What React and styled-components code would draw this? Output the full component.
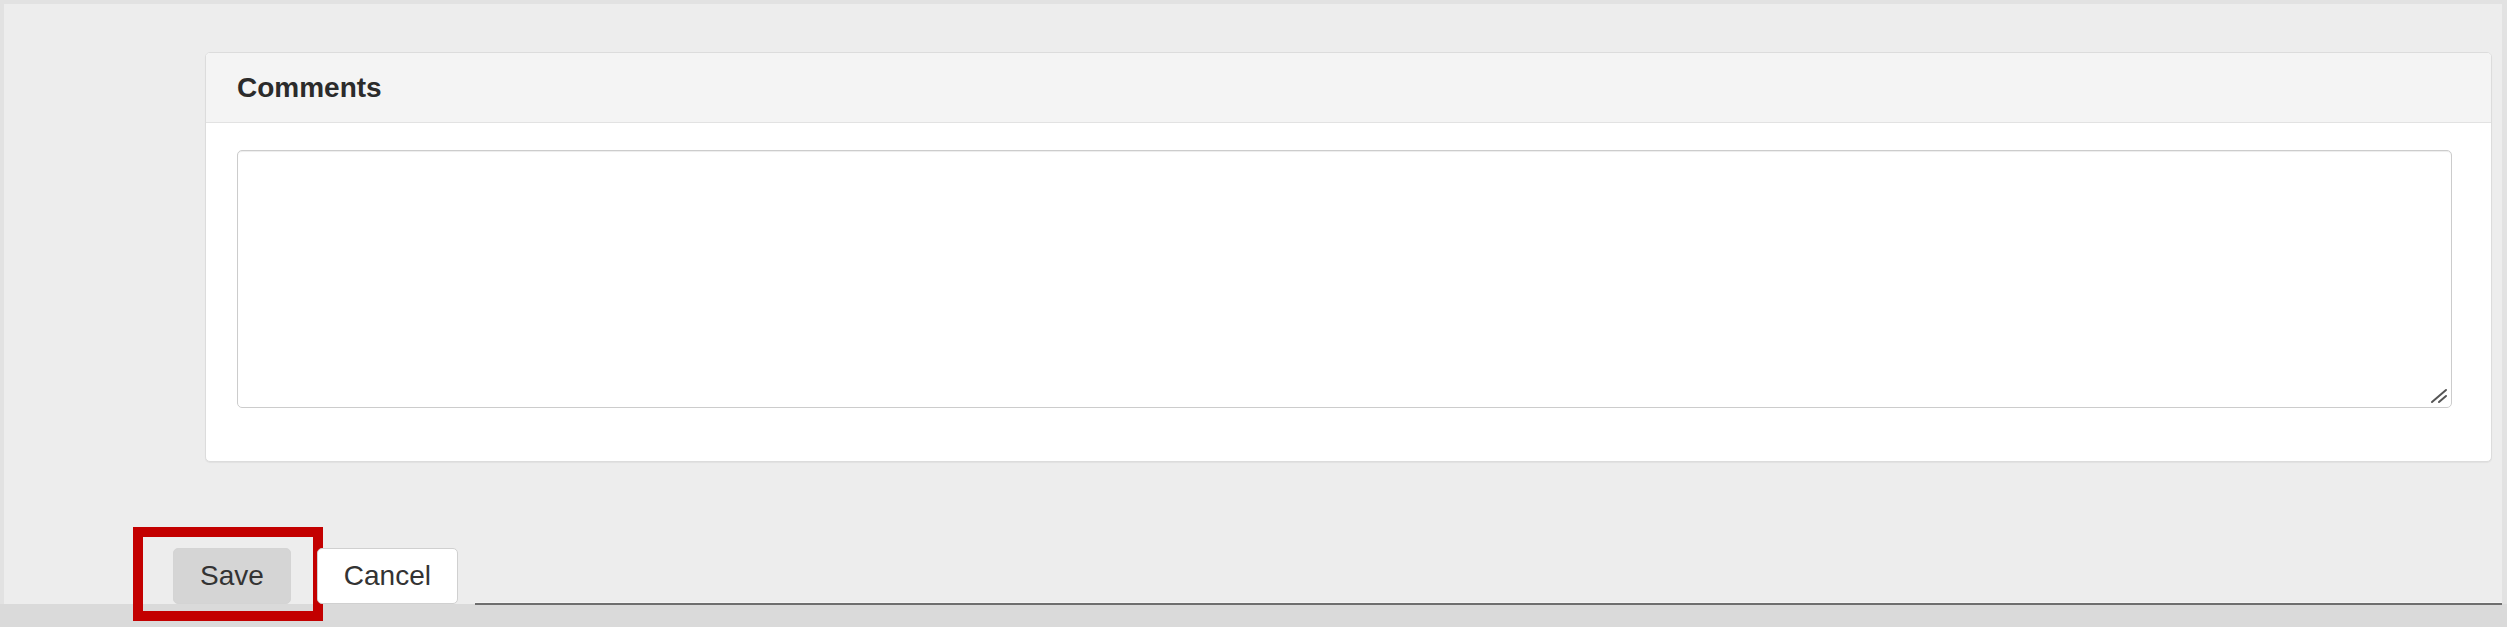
import React from 'react';
import styled, { createGlobalStyle } from 'styled-components';

const GlobalStyle = createGlobalStyle`
    html, body {
        margin: 0;
        padding: 0;
        background: #dadada;
        font-family: "Liberation Sans", Arial, sans-serif;
        color: #333333;
    }
`;

const Screen = styled.div`
    width: 2507px;
    height: 627px;
    background: #dadada;
    overflow: hidden;
`;

const Frame = styled.div`
    box-sizing: border-box;
    height: 604px;
    background: #ededed;
    border-top: 4px solid #e2e2e2;
    border-left: 4px solid #e2e2e2;
    border-right: 5px solid #e2e2e2;
    display: flex;
    flex-direction: column;
`;

const Panel = styled.div`
    margin: 48px 10px 0 201px;
    background: #ffffff;
    border: 1px solid #dcdcdc;
    border-radius: 5px;
    box-shadow: 0 1px 1px rgba(0, 0, 0, 0.05);
    overflow: hidden;
`;

const PanelHeading = styled.div`
    height: 69px;
    display: flex;
    align-items: center;
    padding-left: 31px;
    background: #f4f4f4;
    border-bottom: 1px solid #e2e2e2;
    font-size: 28px;
    font-weight: bold;
    color: #2b2b2b;
`;

const PanelBody = styled.div`
    padding: 27px 39px 53px 31px;
`;

const Field = styled.div`
    position: relative;
`;

const CommentBox = styled.textarea`
    display: block;
    box-sizing: border-box;
    width: 100%;
    height: 258px;
    margin: 0;
    border: 1px solid #cccccc;
    border-radius: 5px;
    box-shadow: inset 0 1px 1px rgba(0, 0, 0, 0.075);
    resize: none;
    outline: none;
    font-family: inherit;
    font-size: 28px;
`;

const Grip = styled.svg`
    position: absolute;
    right: 4px;
    bottom: 4px;
    width: 18px;
    height: 16px;
`;

const ButtonRow = styled.div`
    margin-top: auto;
    margin-left: 169px;
    display: flex;
    align-items: flex-end;
    gap: 26px;
`;

const Button = styled.button`
    position: relative;
    box-sizing: border-box;
    height: 56px;
    padding: 0 26px;
    border: 1px solid ${props => (props.primary ? '#d4d4d4' : '#d0d0d0')};
    border-radius: 5px;
    background: ${props => (props.primary ? '#d5d5d5' : '#ffffff')};
    color: #333333;
    font-family: "Liberation Sans", Arial, sans-serif;
    font-size: 28px;
    line-height: 1;
    cursor: pointer;
`;

const Highlight = styled.span`
    position: absolute;
    left: -41px;
    top: -22px;
    width: 190px;
    height: 94px;
    box-sizing: border-box;
    border: 10px solid #c30000;
    pointer-events: none;
`;

const Rule = styled.div`
    flex: 1;
    margin-left: -9px;
    height: 0;
    border-top: 1px solid #f4f4f4;
    border-bottom: 2px solid #6e6e6e;
    margin-bottom: -1px;
`;

const App = () => {
    return (
        <Screen>
            <GlobalStyle />
            <Frame>
                <Panel>
                    <PanelHeading>Comments</PanelHeading>
                    <PanelBody>
                        <Field>
                            <CommentBox />
                            <Grip viewBox="0 0 18 16">
                                <line x1="2" y1="14" x2="16" y2="2" stroke="#555" strokeWidth="2" strokeLinecap="round" />
                                <line x1="9" y1="14" x2="16" y2="8" stroke="#555" strokeWidth="2" strokeLinecap="round" />
                            </Grip>
                        </Field>
                    </PanelBody>
                </Panel>
                <ButtonRow>
                    <Button primary>
                        Save
                        <Highlight />
                    </Button>
                    <Button>Cancel</Button>
                    <Rule />
                </ButtonRow>
            </Frame>
        </Screen>
    );
};

export default App;
